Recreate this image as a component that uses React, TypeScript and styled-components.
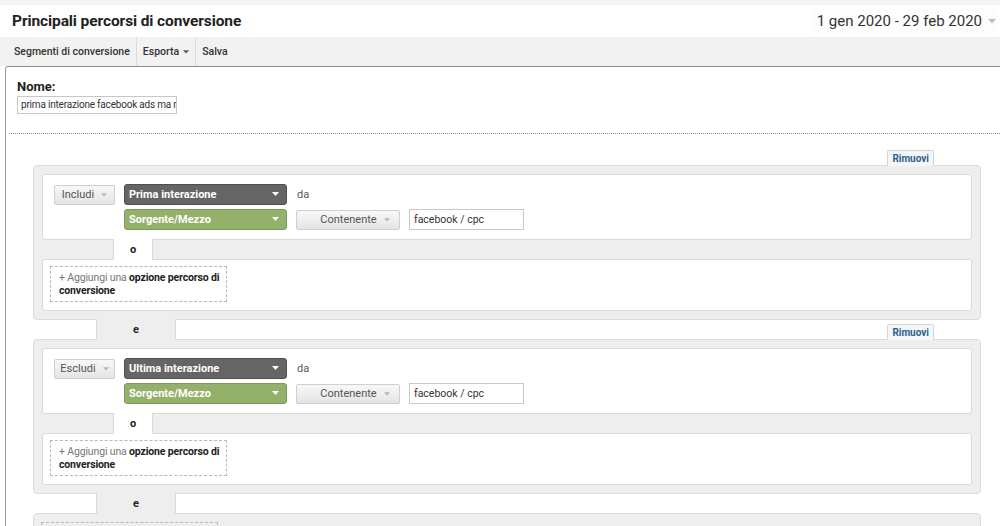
import React from "react";
import styled, { createGlobalStyle } from "styled-components";

const GlobalStyle = createGlobalStyle`
  html, body {
    margin: 0;
    padding: 0;
    background: #ffffff;
    font-family: Roboto, "Liberation Sans", Arial, sans-serif;
    color: #333;
    overflow: hidden;
  }
  * { box-sizing: border-box; }
`;

const Page = styled.div`
  width: 1000px;
  height: 526px;
  overflow: hidden;
  border-top: 5px solid #f5f5f5;
  display: flex;
  flex-direction: column;
  & > * { flex-shrink: 0; }
`;

const Header = styled.div`
  height: 32px;
  display: flex;
  align-items: center;
  justify-content: space-between;
  padding: 0 4px 0 12px;
`;

const Title = styled.h1`
  margin: 0;
  font-size: 15.5px;
  font-weight: 700;
  color: #222;
  letter-spacing: -0.1px;
`;

const DateBox = styled.div`
  display: flex;
  align-items: center;
  gap: 6px;
  font-size: 15px;
  color: #333;
  padding: 3px 0 3px 4px;
  background: #fdfdfd;
`;

const Toolbar = styled.div`
  height: 29px;
  background: #f2f2f2;
  display: flex;
  align-items: center;
  padding-left: 8px;
`;

const ToolItem = styled.div<{ $last?: boolean }>`
  display: flex;
  align-items: center;
  gap: 4px;
  height: 100%;
  padding: 0 6px;
  font-size: 10.5px;
  font-weight: 500;
  color: #333;
  border-right: ${(p) => (p.$last ? "none" : "1px solid #dcdcdc")};
`;

const Main = styled.div`
  flex: 1 0 auto;
  margin-left: 5px;
  border-top: 1px solid #8e8e8e;
  border-left: 1px solid #9a9a9a;
  border-top-left-radius: 3px;
  background: #fff;
`;

const NameSection = styled.div`
  padding: 12px 0 0 11px;
`;

const Label = styled.div`
  font-size: 13px;
  font-weight: 700;
  color: #222;
  line-height: 16px;
`;

const NameInput = styled.div`
  margin-top: 1px;
  width: 160px;
  height: 18px;
  border: 1px solid #c8c8c8;
  font-size: 10px;
  letter-spacing: -0.2px;
  color: #333;
  line-height: 16px;
  padding-left: 3px;
  white-space: nowrap;
  overflow: hidden;
`;

const Divider = styled.div`
  margin: 19px 0 0 3px;
  border-top: 1px dotted #8c8c8c;
`;

const Builder = styled.div`
  padding: 17px 19px 0 27px;
  display: flex;
  flex-direction: column;
`;

const JoinRow = styled.div<{ $h: number }>`
  height: ${(p) => p.$h}px;
  display: flex;
  align-items: flex-end;
  justify-content: space-between;
  padding: 0 47px 0 63px;
`;

const AndTab = styled.div`
  width: 80px;
  height: calc(100% + 2px);
  margin: -1px 0;
  background: #eeeeee;
  border-left: 1px solid #dadada;
  border-right: 1px solid #dadada;
  display: flex;
  align-items: center;
  justify-content: center;
  font-size: 11px;
  font-weight: 700;
  color: #222;
  position: relative;
  z-index: 1;
`;

const RemoveTab = styled.div`
  margin-left: auto;
  height: 16px;
  padding: 0 4px;
  background: #f4f6f8;
  border: 1px solid #d4d4d4;
  border-bottom: none;
  border-radius: 2px 2px 0 0;
  font-size: 10px;
  font-weight: 700;
  color: #2d5f90;
  line-height: 16px;
  margin-bottom: -1px;
  position: relative;
  z-index: 2;
`;

const Group = styled.div<{ $pad?: string }>`
  background: #eeeeee;
  border: 1px solid #dcdcdc;
  border-radius: 4px;
  padding: ${(p) => p.$pad || "8px"};
  display: flex;
  flex-direction: column;
`;

const Card = styled.div`
  background: #fff;
  border: 1px solid #dadada;
  border-radius: 3px;
`;

const RuleCard = styled(Card)`
  padding: 9px 11px 9px 11px;
  display: grid;
  grid-template-columns: 61px 163px auto;
  grid-template-rows: 21px 21px;
  column-gap: 9px;
  row-gap: 4px;
  align-items: center;
`;

const GrayButton = styled.div<{ $w: number }>`
  width: ${(p) => p.$w}px;
  height: 20px;
  background: linear-gradient(#f8f8f8, #e4e4e4);
  border: 1px solid #cfcfcf;
  border-radius: 2px;
  display: flex;
  align-items: center;
  justify-content: center;
  gap: 7px;
  font-size: 11px;
  color: #555;
`;

const Select = styled.div<{ $tone: "dark" | "green" }>`
  height: 21px;
  border-radius: 3px;
  background: ${(p) => (p.$tone === "dark" ? "#656565" : "#93b16a")};
  border: 1px solid ${(p) => (p.$tone === "dark" ? "#4f4f4f" : "#7c9a55")};
  display: flex;
  align-items: center;
  justify-content: space-between;
  padding: 0 7px 0 4px;
  font-size: 11px;
  font-weight: 700;
  color: #fff;
`;

const Da = styled.span`
  font-size: 11px;
  color: #555555;
  padding-left: 1px;
`;

const Condition = styled.div`
  display: flex;
  align-items: center;
  gap: 9px;
`;

const ValueInput = styled.div`
  width: 115px;
  height: 21px;
  border: 1px solid #c9c9c9;
  font-size: 10.5px;
  color: #333;
  line-height: 19px;
  padding-left: 4px;
`;

const OrRow = styled.div`
  height: 19px;
  padding-left: 71px;
  display: flex;
`;

const OrTab = styled.div`
  width: 40px;
  height: 21px;
  margin-top: -1px;
  background: #fff;
  border-left: 1px solid #dadada;
  border-right: 1px solid #dadada;
  display: flex;
  align-items: center;
  justify-content: center;
  font-size: 11px;
  font-weight: 700;
  color: #222;
  position: relative;
  z-index: 1;
`;

const AddCard = styled(Card)`
  padding: 6px 7px 8px 7px;
`;

const AddBox = styled.div`
  width: 177px;
  border: 1px dashed #b9b9b9;
  padding: 4px 0 4px 8px;
  font-size: 10.5px;
  letter-spacing: -0.15px;
  line-height: 13px;
  color: #777;
`;

const Strong = styled.b`
  color: #222;
  font-weight: 700;
`;

const Caret = ({ color, size = 7 }: { color: string; size?: number }) => (
  <svg width={size} height={size / 2 + 1} viewBox="0 0 8 5">
    <path d="M0 0 L8 0 L4 4.5 Z" fill={color} />
  </svg>
);

const AddOption = () => (
  <AddBox>
    + Aggiungi una <Strong>opzione percorso di conversione</Strong>
  </AddBox>
);

type Rule = { mode: string; point: string };

const RuleGroup = ({ rule }: { rule: Rule }) => (
  <Group>
    <RuleCard>
      <GrayButton $w={61}>
        {rule.mode} <Caret color="#b5b5b5" size={6} />
      </GrayButton>
      <Select $tone="dark">
        {rule.point} <Caret color="#fff" />
      </Select>
      <Da>da</Da>
      <span />
      <Select $tone="green">
        Sorgente/Mezzo <Caret color="#fff" />
      </Select>
      <Condition>
        <GrayButton $w={104}>
          <span style={{ marginLeft: 14 }}>Contenente</span>
          <Caret color="#b5b5b5" size={6} />
        </GrayButton>
        <ValueInput>facebook / cpc</ValueInput>
      </Condition>
    </RuleCard>
    <OrRow>
      <OrTab>o</OrTab>
    </OrRow>
    <AddCard>
      <AddOption />
    </AddCard>
  </Group>
);

const rules: Rule[] = [
  { mode: "Includi", point: "Prima interazione" },
  { mode: "Escludi", point: "Ultima interazione" },
];

export default function App() {
  return (
    <>
      <GlobalStyle />
      <Page>
        <Header>
          <Title>Principali percorsi di conversione</Title>
          <DateBox>
            1 gen 2020 - 29 feb 2020 <Caret color="#bdbdbd" size={8} />
          </DateBox>
        </Header>
        <Toolbar>
          <ToolItem>Segmenti di conversione</ToolItem>
          <ToolItem>
            Esporta <Caret color="#555" size={6} />
          </ToolItem>
          <ToolItem $last>Salva</ToolItem>
        </Toolbar>
        <Main>
          <NameSection>
            <Label>Nome:</Label>
            <NameInput>prima interazione facebook ads ma n</NameInput>
          </NameSection>
          <Divider />
          <Builder>
            <JoinRow $h={14}>
              <RemoveTab>Rimuovi</RemoveTab>
            </JoinRow>
            <RuleGroup rule={rules[0]} />
            <JoinRow $h={19}>
              <AndTab>e</AndTab>
              <RemoveTab>Rimuovi</RemoveTab>
            </JoinRow>
            <RuleGroup rule={rules[1]} />
            <JoinRow $h={19}>
              <AndTab>e</AndTab>
            </JoinRow>
            <Group $pad="8px 7px">
              <AddOption />
            </Group>
          </Builder>
        </Main>
      </Page>
    </>
  );
}
